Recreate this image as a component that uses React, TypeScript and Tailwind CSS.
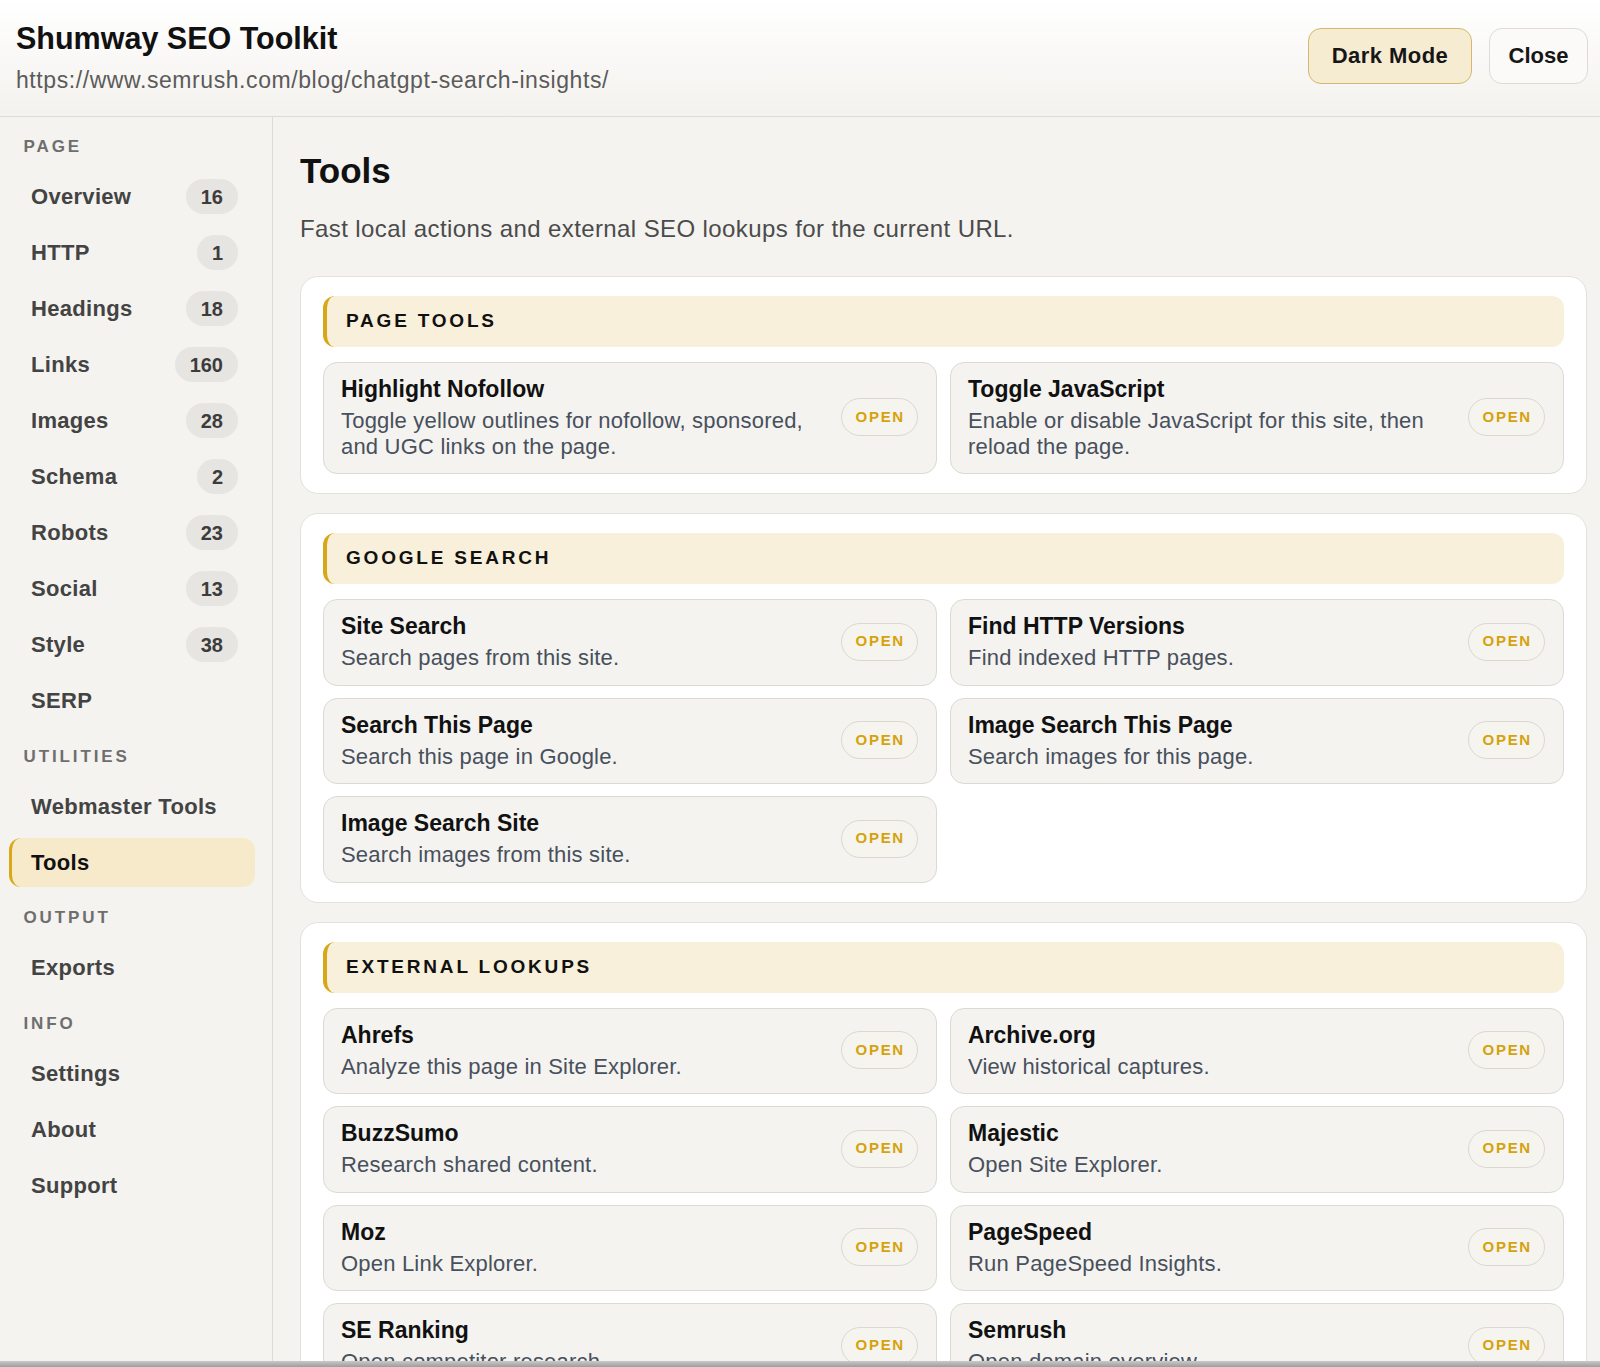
import clsx from 'clsx'

type NavItem = { label: string; count?: number; active?: boolean }
type NavGroup = { title: string; items: NavItem[] }
type Tool = { name: string; desc: string }
type Section = { title: string; tools: Tool[] }

const NAV: NavGroup[] = [
  {
    title: 'Page',
    items: [
      { label: 'Overview', count: 16 },
      { label: 'HTTP', count: 1 },
      { label: 'Headings', count: 18 },
      { label: 'Links', count: 160 },
      { label: 'Images', count: 28 },
      { label: 'Schema', count: 2 },
      { label: 'Robots', count: 23 },
      { label: 'Social', count: 13 },
      { label: 'Style', count: 38 },
      { label: 'SERP' },
    ],
  },
  {
    title: 'Utilities',
    items: [{ label: 'Webmaster Tools' }, { label: 'Tools', active: true }],
  },
  { title: 'Output', items: [{ label: 'Exports' }] },
  { title: 'Info', items: [{ label: 'Settings' }, { label: 'About' }, { label: 'Support' }] },
]

const SECTIONS: Section[] = [
  {
    title: 'Page Tools',
    tools: [
      {
        name: 'Highlight Nofollow',
        desc: 'Toggle yellow outlines for nofollow, sponsored, and UGC links on the page.',
      },
      {
        name: 'Toggle JavaScript',
        desc: 'Enable or disable JavaScript for this site, then reload the page.',
      },
    ],
  },
  {
    title: 'Google Search',
    tools: [
      { name: 'Site Search', desc: 'Search pages from this site.' },
      { name: 'Find HTTP Versions', desc: 'Find indexed HTTP pages.' },
      { name: 'Search This Page', desc: 'Search this page in Google.' },
      { name: 'Image Search This Page', desc: 'Search images for this page.' },
      { name: 'Image Search Site', desc: 'Search images from this site.' },
    ],
  },
  {
    title: 'External Lookups',
    tools: [
      { name: 'Ahrefs', desc: 'Analyze this page in Site Explorer.' },
      { name: 'Archive.org', desc: 'View historical captures.' },
      { name: 'BuzzSumo', desc: 'Research shared content.' },
      { name: 'Majestic', desc: 'Open Site Explorer.' },
      { name: 'Moz', desc: 'Open Link Explorer.' },
      { name: 'PageSpeed', desc: 'Run PageSpeed Insights.' },
      { name: 'SE Ranking', desc: 'Open competitor research.' },
      { name: 'Semrush', desc: 'Open domain overview.' },
    ],
  },
]

const ToolCard = ({ tool }: { tool: Tool }) => (
  <div className="flex items-center gap-[18px] rounded-[14px] border border-[#dcd9d3] bg-[#f4f3f0] pl-[17px] pr-[18px] pt-[12px] pb-[13.5px]">
    <div className="min-w-0 flex-1">
      <div className="text-[23px] font-bold leading-[28px] text-[#111]">{tool.name}</div>
      <div className="mt-[5px] text-[22px] leading-[26px] tracking-[0.2px] text-[#48505c]">
        {tool.desc}
      </div>
    </div>
    <button className="h-[38px] w-[77px] shrink-0 rounded-full border border-[#dcd8d0] bg-[#f6f4ef] pl-[1.5px] text-[15px] font-bold tracking-[1.7px] text-[#d5a20e]">
      OPEN
    </button>
  </div>
)

export default function App() {
  return (
    <div className="flex h-[1367px] flex-col overflow-hidden bg-[#f4f3f0] font-['Liberation_Sans',Arial,sans-serif]">
      {/* Header */}
      <header className="flex h-[117px] shrink-0 items-start justify-between border-b border-[#dedbd5] bg-gradient-to-b from-white to-[#f4f2ee] pl-[16px] pr-[12px] pt-[20px]">
        <div>
          <h1 className="text-[30.5px] font-bold leading-[36px] text-[#111]">Shumway SEO Toolkit</h1>
          <p className="mt-[10px] text-[23px] leading-[28px] tracking-[0.025em] text-[#5b5b5b]">
            https://www.semrush.com/blog/chatgpt-search-insights/
          </p>
        </div>
        <div className="mt-[7.5px] flex gap-[17px]">
          <button className="h-[56px] w-[164px] rounded-[13px] border border-[#d4b86e] bg-[#f6ecd2] text-[22px] font-bold tracking-[0.02em] text-[#161616]">
            Dark Mode
          </button>
          <button className="h-[56px] w-[99px] rounded-[13px] border border-[#dedbd6] bg-[#fbfaf8] text-[22px] font-bold text-[#161616]">
            Close
          </button>
        </div>
      </header>

      <div className="flex min-h-0 flex-1">
        {/* Sidebar */}
        <aside className="w-[273px] shrink-0 border-r border-[#dedbd6] pl-[9px] pr-[17px] pt-[18px]">
          {NAV.map((group, gi) => (
            <div key={group.title} className={clsx(gi > 0 && 'mt-[19.5px]')}>
              <div className="mb-[13px] flex h-[24px] items-center pl-[14.5px] text-[17px] font-bold uppercase tracking-[0.17em] text-[#6e6e6e]">
                {group.title}
              </div>
              {group.items.map((item) => (
                <div
                  key={item.label}
                  className={clsx(
                    'mb-[7px] flex h-[49px] items-center justify-between rounded-[12px] border-l-[3px] pl-[19px] pr-[17px]',
                    item.active ? 'border-[#d9a814] bg-[#f6eacb] text-[#111]' : 'border-transparent text-[#434343]'
                  )}
                >
                  <span className="text-[22px] font-bold tracking-[0.3px]">{item.label}</span>
                  {item.count !== undefined && (
                    <span className="flex h-[35px] items-center rounded-full bg-[#e7e5e1] px-[15px] text-[20px] font-bold text-[#3c3c3c]">
                      {item.count}
                    </span>
                  )}
                </div>
              ))}
            </div>
          ))}
        </aside>

        {/* Main */}
        <main className="min-w-0 flex-1 overflow-hidden pl-[27px] pr-[13px] pt-[34px]">
          <h2 className="text-[35px] font-bold leading-[40px] text-[#111]">Tools</h2>
          <p className="mt-[22.5px] text-[24px] leading-[30px] tracking-[0.4px] text-[#4b4b4b]">
            Fast local actions and external SEO lookups for the current URL.
          </p>

          <div className="mt-[32px] flex flex-col gap-[19px]">
            {SECTIONS.map((section) => (
              <section
                key={section.title}
                className="rounded-[18px] border border-[#e4e1dc] bg-white px-[22px] pt-[19px] pb-[19px]"
              >
                <div className="flex h-[51px] items-center rounded-[12px] border-l-[4px] border-[#d6a718] bg-[#f8f0da] pl-[19px] text-[19px] font-bold uppercase tracking-[2.8px] text-[#111]">
                  {section.title}
                </div>
                <div className="mt-[15px] grid grid-cols-2 gap-x-[13px] gap-y-[12px]">
                  {section.tools.map((tool) => (
                    <ToolCard key={tool.name} tool={tool} />
                  ))}
                </div>
              </section>
            ))}
          </div>
        </main>
      </div>

      <div className="h-[6px] shrink-0 bg-gradient-to-b from-[#c9c9c9] to-[#9d9d9d]" />
    </div>
  )
}
